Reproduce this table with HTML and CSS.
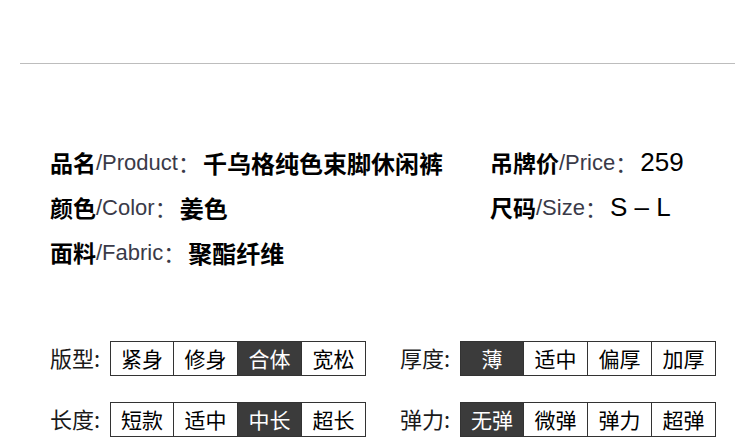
FILE: index.html
```html
<!DOCTYPE html>
<html lang="zh-CN">
<head>
<meta charset="utf-8">
<link rel="stylesheet" href="styles.css">
</head>
<body>
<div class="divider"></div>
<section class="info">
  <div class="item"><b class="k">品名</b><span class="en">/Product</span><span class="colon">：</span><b class="v">千乌格纯色束脚休闲裤</b></div>
  <div class="item"><b class="k">吊牌价</b><span class="en">/Price</span><span class="colon">：</span><span class="num">259</span></div>
  <div class="item"><b class="k">颜色</b><span class="en">/Color</span><span class="colon">：</span><b class="v">姜色</b></div>
  <div class="item"><b class="k">尺码</b><span class="en">/Size</span><span class="colon">：</span><span class="num">S – L</span></div>
  <div class="item"><b class="k">面料</b><span class="en">/Fabric</span><span class="colon">：</span><b class="v">聚酯纤维</b></div>
</section>
<section class="specs">
  <div class="spec">
    <span class="label">版型:</span>
    <div class="opts"><span class="opt">紧身</span><span class="opt">修身</span><span class="opt on">合体</span><span class="opt">宽松</span></div>
  </div>
  <div class="spec">
    <span class="label">厚度:</span>
    <div class="opts"><span class="opt on">薄</span><span class="opt">适中</span><span class="opt">偏厚</span><span class="opt">加厚</span></div>
  </div>
  <div class="spec">
    <span class="label">长度:</span>
    <div class="opts"><span class="opt">短款</span><span class="opt">适中</span><span class="opt on">中长</span><span class="opt">超长</span></div>
  </div>
  <div class="spec">
    <span class="label">弹力:</span>
    <div class="opts"><span class="opt on">无弹</span><span class="opt">微弹</span><span class="opt">弹力</span><span class="opt">超弹</span></div>
  </div>
</section>
</body>
</html>
```

FILE: styles.css
```css
html, body {
  margin: 0;
  padding: 0;
  background: #fff;
}
body {
  font-family: "Noto Sans CJK SC", "Liberation Sans", sans-serif;
  color: #111;
  width: 750px;
  height: 445px;
  overflow: hidden;
}
.divider {
  margin: 63px 15px 0 20px;
  height: 1px;
  background: #bdbdbd;
}
.info {
  display: grid;
  grid-template-columns: 440px auto;
  padding-left: 50px;
  margin-top: 76px;
}
.item {
  height: 45px;
  line-height: 45px;
  display: flex;
  align-items: center;
  white-space: nowrap;
}
.k, .v {
  font-family: "Noto Sans CJK SC", sans-serif;
  font-weight: 700;
  font-size: 23px;
  color: #000;
}
.v { font-size: 24px; }
.en {
  font-family: "Liberation Sans", Arial, sans-serif;
  font-size: 22px;
  color: #3a3a48;
}
.colon {
  font-family: "Noto Sans CJK SC", sans-serif;
  font-size: 22px;
  color: #3a3a48;
  margin-right: 3px;
}
.num {
  font-family: "Liberation Sans", Arial, sans-serif;
  font-size: 26px;
  color: #000;
}
.specs {
  display: grid;
  grid-template-columns: 350px auto;
  row-gap: 26px;
  padding-left: 50px;
  margin-top: 66px;
}
.spec {
  display: flex;
  align-items: center;
  height: 35px;
}
.label {
  width: 60px;
  font-size: 22px;
  color: #1a1a1a;
  line-height: 35px;
  margin-top: -3px;
}
.opts {
  display: flex;
  border: 1px solid #333;
}
.opt {
  width: 63px;
  height: 33px;
  line-height: 33px;
  text-align: center;
  font-size: 21px;
  color: #000;
  border-left: 1px solid #333;
}
.opt:first-child {
  border-left: 0;
  width: 62px;
}
.opt.on {
  background: #3b3b3b;
  color: #fff;
}
```
